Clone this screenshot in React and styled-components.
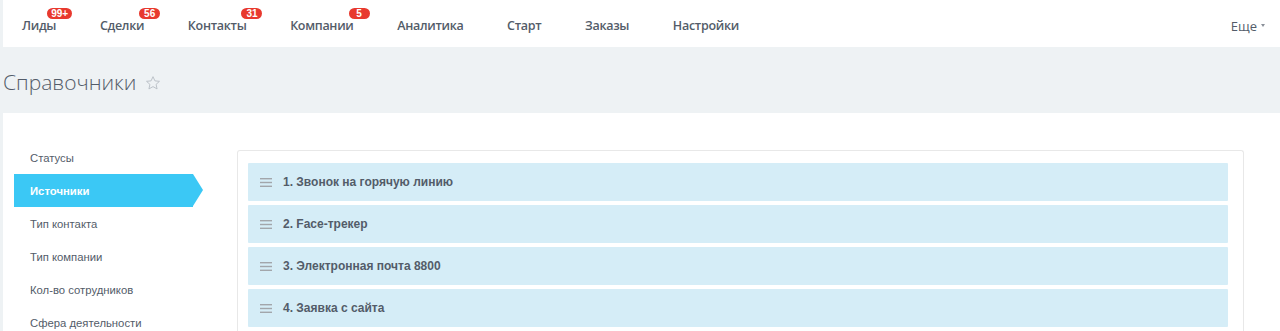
import React from 'react';
import styled, { createGlobalStyle } from 'styled-components';

const GlobalStyle = createGlobalStyle`
  html, body {
    margin: 0;
    padding: 0;
    background: #eef2f4;
    overflow: hidden;
  }

  body {
    font-family: "Open Sans", "Liberation Sans", sans-serif;
  }
`;

const Page = styled.div`
  padding-left: 3px;
`;

const TopBar = styled.nav`
  height: 47px;
  background: #fff;
  display: flex;
  align-items: center;
  padding: 0 15px 0 19px;
`;

const NavList = styled.div`
  display: flex;
  align-items: center;
  gap: 43.7px;
  flex: 1;
`;

const NavItem = styled.span`
  position: relative;
  font-size: 12.5px;
  font-weight: 600;
  letter-spacing: -0.3px;
  color: #535c69;
  line-height: 18px;
  padding-top: 4px;
`;

const Badge = styled.span`
  position: absolute;
  top: -5px;
  right: -16px;
  min-width: 21px;
  height: 11px;
  box-sizing: border-box;
  padding: 0 4px;
  border-radius: 6px;
  background: #e8392e;
  color: #fff;
  font-family: "Liberation Sans", Arial, sans-serif;
  font-size: 10px;
  font-weight: 700;
  letter-spacing: 0;
  line-height: 11px;
  text-align: center;
`;

const More = styled.span`
  font-size: 13px;
  color: #535c69;
  padding-top: 4px;
  display: flex;
  align-items: center;
  gap: 4px;
`;

const Caret = styled.span`
  width: 0;
  height: 0;
  border-left: 2.5px solid transparent;
  border-right: 2.5px solid transparent;
  border-top: 3px solid #8a9099;
`;

const TitleBar = styled.div`
  height: 66px;
  box-sizing: border-box;
  padding-top: 4px;
  display: flex;
  align-items: center;
  gap: 9px;
`;

const Title = styled.h1`
  margin: 0;
  font-size: 21px;
  font-weight: 300;
  color: #535c69;
`;

const Panel = styled.div`
  background: #fff;
  display: flex;
  gap: 33px;
  padding: 28px 36px 0 11px;
  height: 240px;
`;

const Menu = styled.ul`
  list-style: none;
  margin: 0;
  padding: 0;
  width: 190px;
  flex-shrink: 0;
`;

const MenuItem = styled.li`
  position: relative;
  height: 33px;
  width: 179px;
  display: flex;
  align-items: center;
  padding-left: 16px;
  box-sizing: border-box;
  font-family: "Liberation Sans", Arial, sans-serif;
  font-size: 11.3px;
  color: ${p => (p.$active ? '#fff' : '#535c69')};
  font-weight: ${p => (p.$active ? 700 : 400)};
  background: ${p => (p.$active ? '#3bc8f5' : 'transparent')};

  &::after {
    content: '';
    display: ${p => (p.$active ? 'block' : 'none')};
    position: absolute;
    right: -10px;
    top: 0;
    border-top: 16.5px solid transparent;
    border-bottom: 16.5px solid transparent;
    border-left: 10px solid #3bc8f5;
  }
`;

const ListBox = styled.div`
  flex: 1;
  margin-top: 9px;
  border: 1px solid #e8e8e8;
  border-bottom: none;
  border-radius: 3px 3px 0 0;
  padding: 12px 15px 0 10px;
  display: flex;
  flex-direction: column;
  gap: 4px;
`;

const Row = styled.div`
  height: 38px;
  flex-shrink: 0;
  background: #d5edf7;
  border-radius: 1px;
  display: flex;
  align-items: center;
  padding-left: 12px;
  gap: 11px;
  font-family: "Liberation Sans", Arial, sans-serif;
  font-size: 12px;
  font-weight: 700;
  color: #535c69;
`;

const Grip = () => (
  <svg width="12" height="9" viewBox="0 0 12 9">
    <rect x="0" y="0" width="12" height="1.4" fill="#a2a6ab" />
    <rect x="0" y="3.8" width="12" height="1.4" fill="#a2a6ab" />
    <rect x="0" y="7.6" width="12" height="1.4" fill="#a2a6ab" />
  </svg>
);

const Star = () => (
  <svg width="16" height="16" viewBox="0 0 24 24" style={{ marginTop: 2 }}>
    <path
      d="M12 2.5l2.9 6.3 6.8.7-5.1 4.6 1.5 6.8L12 17.4l-6.1 3.5 1.5-6.8-5.1-4.6 6.8-.7z"
      fill="none"
      stroke="#b8bec5"
      strokeWidth="1.4"
      strokeLinejoin="round"
    />
  </svg>
);

const navItems = [
  { label: 'Лиды', badge: '99+' },
  { label: 'Сделки', badge: '56' },
  { label: 'Контакты', badge: '31' },
  { label: 'Компании', badge: '5' },
  { label: 'Аналитика' },
  { label: 'Старт' },
  { label: 'Заказы' },
  { label: 'Настройки' },
];

const menu = [
  'Статусы',
  'Источники',
  'Тип контакта',
  'Тип компании',
  'Кол-во сотрудников',
  'Сфера деятельности',
];

const rows = [
  '1. Звонок на горячую линию',
  '2. Face-трекер',
  '3. Электронная почта 8800',
  '4. Заявка с сайта',
  '',
];

export default function App() {
  return (
    <>
      <GlobalStyle />
      <Page>
        <TopBar>
          <NavList>
            {navItems.map(item => (
              <NavItem key={item.label}>
                {item.label}
                {item.badge && <Badge>{item.badge}</Badge>}
              </NavItem>
            ))}
          </NavList>
          <More>
            Еще <Caret />
          </More>
        </TopBar>

        <TitleBar>
          <Title>Справочники</Title>
          <Star />
        </TitleBar>

        <Panel>
          <Menu>
            {menu.map(m => (
              <MenuItem key={m} $active={m === 'Источники'}>
                {m}
              </MenuItem>
            ))}
          </Menu>
          <ListBox>
            {rows.map((r, i) => (
              <Row key={i}>
                {r && <Grip />}
                {r}
              </Row>
            ))}
          </ListBox>
        </Panel>
      </Page>
    </>
  );
}
